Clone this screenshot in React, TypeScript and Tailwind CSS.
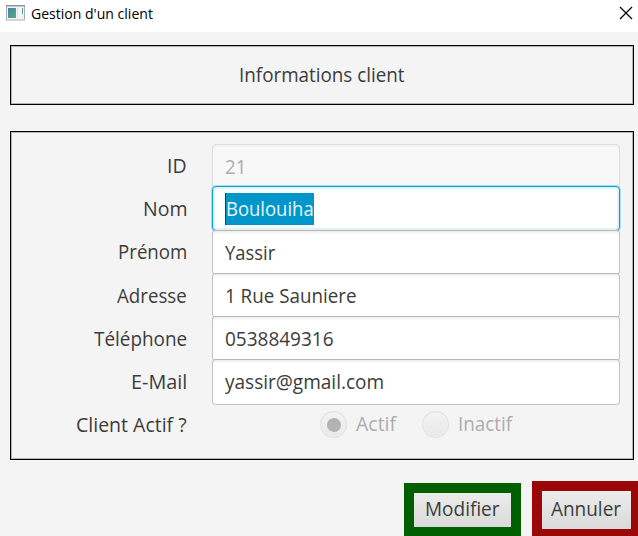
import { useLayoutEffect, useRef, useState } from "react";
import clsx from "clsx";

// Condenses a line of text horizontally so that it fills exactly `width` pixels.
function Label({ text, width, className }: { text: string; width: number; className?: string }) {
  const ref = useRef<HTMLSpanElement>(null);
  const [scale, setScale] = useState(1);
  useLayoutEffect(() => {
    if (ref.current) setScale(width / ref.current.offsetWidth);
  }, [width]);
  return (
    <span className={clsx("block shrink-0 whitespace-nowrap", className)} style={{ width }}>
      <span ref={ref} className="inline-block origin-left" style={{ transform: `scaleX(${scale})` }}>
        {text}
      </span>
    </span>
  );
}

type Row = {
  label: string;
  labelWidth: number;
  value: string;
  valueWidth: number;
  state?: "disabled" | "focused";
};

const rows: Row[] = [
  { label: "ID", labelWidth: 20, value: "21", valueWidth: 21, state: "disabled" },
  { label: "Nom", labelWidth: 44, value: "Boulouiha", valueWidth: 88, state: "focused" },
  { label: "Prénom", labelWidth: 69, value: "Yassir", valueWidth: 50 },
  { label: "Adresse", labelWidth: 70, value: "1 Rue Sauniere", valueWidth: 131 },
  { label: "Téléphone", labelWidth: 93, value: "0538849316", valueWidth: 109 },
  { label: "E-Mail", labelWidth: 56, value: "yassir@gmail.com", valueWidth: 159 },
];

function Field({ row, last }: { row: Row; last: boolean }) {
  return (
    <div
      className={clsx(
        "flex w-[408px] items-center rounded-[4px] border pl-3",
        last ? "h-[46px]" : "h-[45px]",
        row.state === "disabled" && "border-[#dedede] bg-[#f8f8f8] text-[#adadad] shadow-[inset_0_2px_2px_#f1f1f1]",
        row.state === "focused" &&
          "border-[#0a9fd3] bg-white text-[#e9f6fb] shadow-[0_0_0_1px_#a8def0,inset_0_0_0_2px_#dff2f9]",
        !row.state && "border-[#c4c4c4] border-t-[#b5b5b5] bg-white shadow-[inset_0_2px_2px_#f0f0f0]",
      )}
    >
      {row.state === "focused" ? (
        <div className="flex h-8 items-center border-l border-[#26424c] bg-[#0096c9]">
          <Label text={row.value} width={row.valueWidth} />
        </div>
      ) : (
        <Label text={row.value} width={row.valueWidth} />
      )}
    </div>
  );
}

function Radio({ checked }: { checked?: boolean }) {
  return (
    <div className="flex size-[27px] items-center justify-center rounded-full border border-[#dedede] bg-linear-to-b from-[#f3f3f3] to-[#e9e9e9] shadow-[inset_0_0_0_1px_#f1f1f1]">
      {checked && <div className="size-[14px] rounded-full bg-[#b3b3b3]" />}
    </div>
  );
}

export default function App() {
  return (
    <div className="flex h-[536px] w-[638px] flex-col overflow-hidden bg-[#f4f4f4] font-['Open_Sans',sans-serif] text-[19.5px] leading-[26px] text-[#3c3c3c]">
      <header className="flex h-8 shrink-0 items-start bg-white text-black">
        <svg className="mt-[5px] ml-[6px]" width="19" height="16" viewBox="0 0 19 16">
          <defs>
            <linearGradient id="pane" x1="0" y1="0" x2="1" y2="1">
              <stop offset="0" stopColor="#4384a0" />
              <stop offset="1" stopColor="#59ac83" />
            </linearGradient>
          </defs>
          <rect x="0.5" y="0.5" width="18" height="14.5" fill="#f4f5f6" stroke="#a9adb5" />
          <path d="M0 0.8H19" stroke="#8e949f" strokeWidth="1.4" />
          <rect x="2" y="3" width="8" height="10" fill="url(#pane)" />
          <path d="M11.5 3V13" stroke="#dfe3e8" />
          <path d="M16.5 3V9" stroke="#63a394" />
          <path d="M16.5 9V13" stroke="#dce9e4" />
        </svg>
        <Label text="Gestion d'un client" width={122} className="mt-1 ml-[6px] text-[14.5px] leading-5" />
        <svg className="mt-[6px] mr-[5px] ml-auto" width="14" height="14" viewBox="0 0 14 14">
          <path d="M1 1L13 13M13 1L1 13" stroke="#000" strokeWidth="1.2" />
        </svg>
      </header>

      <main className="flex flex-col pt-[13px] pl-[10px]">
        <section className="flex h-[60px] w-[624px] justify-center border border-black pt-[16px] shadow-[inset_0_0_0_1px_#b4b4b4]">
          <Label text="Informations client" width={166} />
        </section>

        <section className="mt-[26px] flex h-[329px] w-[624px] flex-col border border-black pt-3 shadow-[inset_0_0_0_1px_#b4b4b4]">
          <div className="grid grid-cols-[176px_408px] gap-x-[25px]">
            <div className="flex flex-col items-end pt-[9px]">
              {rows.map((row) => (
                <div key={row.label} className="h-[43.2px]">
                  <Label text={row.label} width={row.labelWidth} />
                </div>
              ))}
              <Label text="Client Actif ?" width={111} />
            </div>
            <div className="flex flex-col">
              {rows.map((row, i) => (
                <div key={row.label} className={clsx(i === 1 && "-mt-[3px]", i === 2 && "-mt-px", i > 2 && "-mt-[2px]")}>
                  <Field row={row} last={i === rows.length - 1} />
                </div>
              ))}
              <div className="mt-[6px] flex items-center pl-[108px] text-[#adadad]">
                <Radio checked />
                <Label text="Actif" width={40} className="-mt-px ml-[9px]" />
                <div className="ml-[26px]">
                  <Radio />
                </div>
                <Label text="Inactif" width={54} className="-mt-px ml-[9px]" />
              </div>
            </div>
          </div>
        </section>

        <footer className="mt-[21px] flex items-start gap-[11px] pl-[394px]">
          <button className="mt-[2px] flex h-[54px] w-[117px] shrink-0 justify-center border-10 border-[#006000] bg-linear-to-b from-[#ececec] to-[#dadada] pt-[3px]">
            <Label text="Modifier" width={75} />
          </button>
          <button className="flex h-[58px] w-[109px] shrink-0 justify-center border-10 border-[#9b0707] bg-linear-to-b from-[#ececec] to-[#dadada] pt-[5px]">
            <Label text="Annuler" width={70} className="-ml-[2px]" />
          </button>
        </footer>
      </main>
    </div>
  );
}
